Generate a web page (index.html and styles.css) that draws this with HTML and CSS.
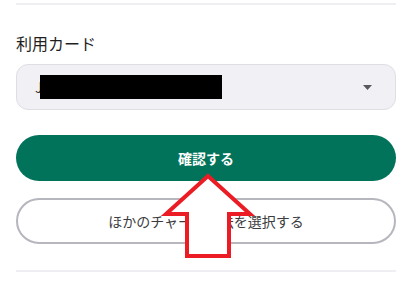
FILE: index.html
```html
<!DOCTYPE html>
<html lang="ja">
<head>
<meta charset="utf-8">
<link rel="stylesheet" href="styles.css">
</head>
<body>
<div class="page">
  <div class="rule rule-top"></div>
  <div class="label">利用カード</div>
  <div class="select">
    <div class="select-value"><span class="card-text">J</span><span class="redact"></span></div>
    <svg class="caret" width="9" height="5" viewBox="0 0 9 5"><path d="M0 0 L9 0 L4.5 5 Z" fill="#58585e"/></svg>
  </div>
  <button class="btn btn-primary">確認する</button>
  <button class="btn btn-outline">ほかのチャージ方法を選択する</button>
  <div class="rule rule-bottom"></div>
  <svg class="arrow" width="412" height="284" viewBox="0 0 412 284">
    <polygon points="208,176 250,214 229,214 229,256 187,256 187,214 166,214" fill="#ffffff" stroke="#ec1c24" stroke-width="4" stroke-linejoin="miter"/>
  </svg>
</div>
</body>
</html>
```
FILE: styles.css
```css
* { box-sizing: border-box; }
html, body { margin: 0; padding: 0; background: #ffffff; }
body {
  font-family: "Noto Sans CJK JP", "Noto Sans", sans-serif;
  width: 412px;
  height: 284px;
  overflow: hidden;
}
.page {
  position: relative;
  padding: 3px 16px 0;
  display: flex;
  flex-direction: column;
  height: 284px;
}
.rule {
  height: 2px;
  background: #eeeef3;
  flex: none;
}
.label {
  margin-top: 26px;
  font-size: 16px;
  line-height: 24px;
  color: #1f1f1f;
}
.select {
  margin-top: 9px;
  height: 46px;
  border: 1.5px solid #dedee4;
  border-radius: 12px;
  background: #f0f0f5;
  display: flex;
  align-items: center;
  justify-content: space-between;
  padding: 0 23px 0 18px;
}
.select-value {
  display: flex;
  align-items: center;
}
.card-text {
  font-size: 14px;
  line-height: 24px;
  color: #333;
}
.redact {
  display: inline-block;
  width: 182px;
  height: 24px;
  background: #000;
  margin-left: -3px;
  margin-top: 0;
}
.caret { display: block; margin-top: 1px; }
.btn {
  font-family: "Noto Sans CJK JP", "Noto Sans", sans-serif;
  height: 46px;
  border-radius: 23px;
  width: 100%;
  font-size: 14px;
  display: flex;
  align-items: center;
  justify-content: center;
  cursor: pointer;
}
.btn-primary {
  margin-top: 25px;
  background: #00735a;
  border: none;
  color: #ffffff;
  font-weight: 700;
}
.btn-outline {
  margin-top: 17px;
  background: #ffffff;
  border: 2px solid #b6b6be;
  color: #3c3c40;
  font-size: 14px;
}
.rule-bottom { margin-top: 26px; }
.arrow {
  position: absolute;
  left: 0;
  top: 0;
  pointer-events: none;
}
```
